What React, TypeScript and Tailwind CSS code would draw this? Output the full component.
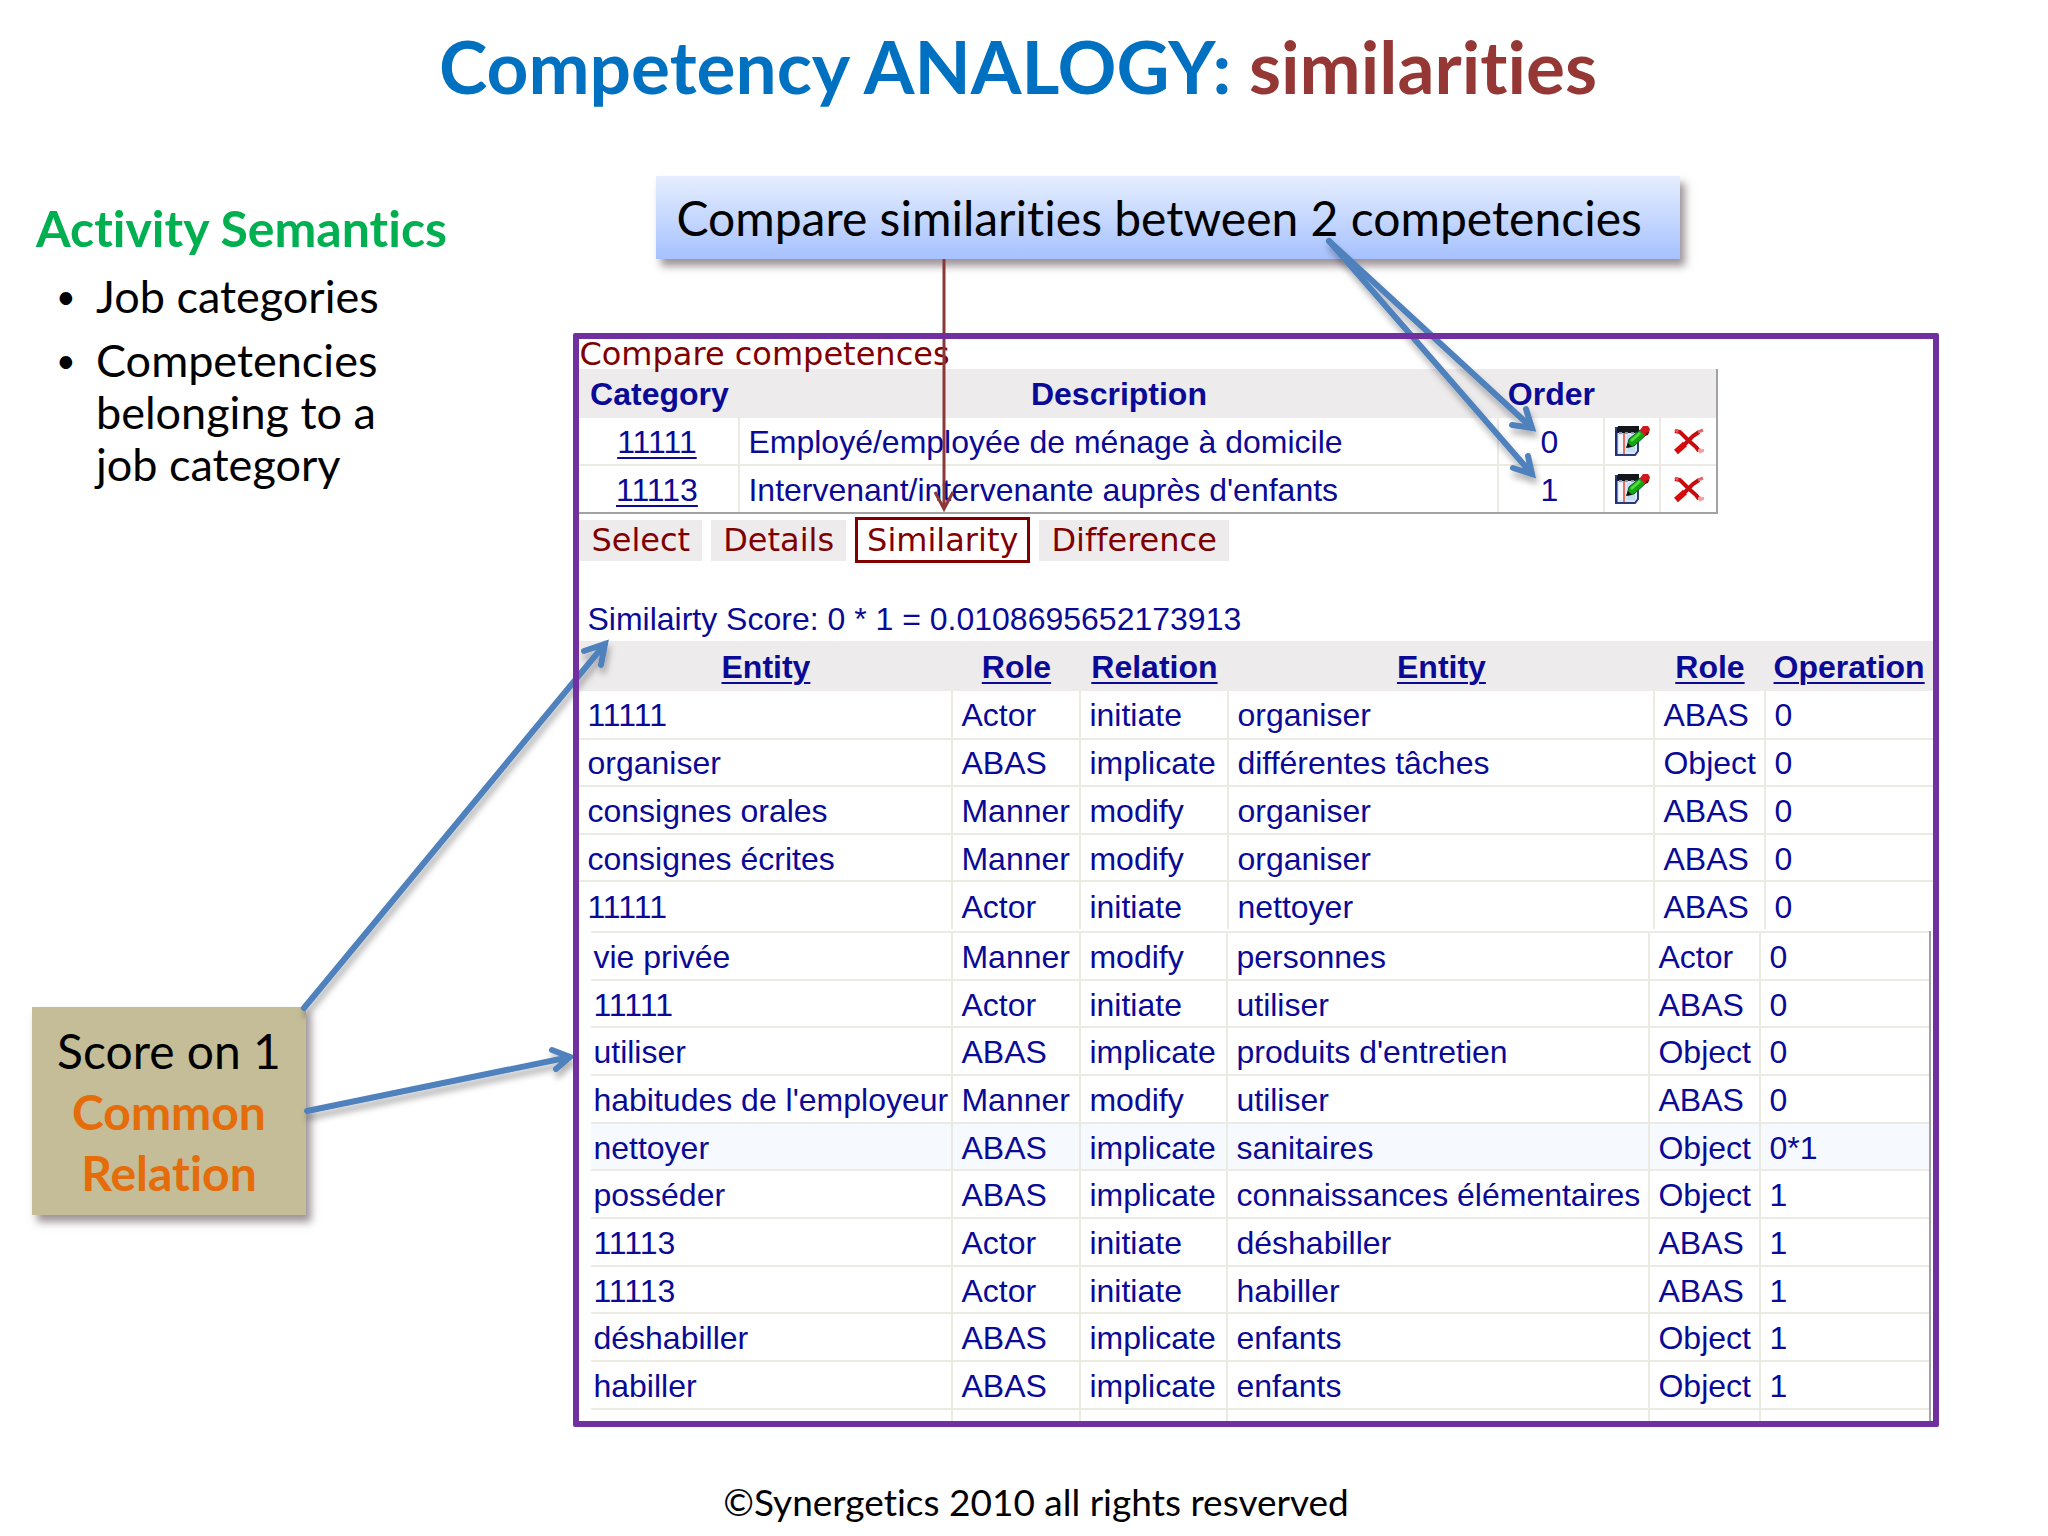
import React from "react";

type Relation = [string, string, string, string, string, string];

const competences = [
  { category: "11111", description: "Employé/employée de ménage à domicile", order: 0 },
  { category: "11113", description: "Intervenant/intervenante auprès d'enfants", order: 1 },
];

const firstRelations: Relation[] = [
  ["11111", "Actor", "initiate", "organiser", "ABAS", "0"],
  ["organiser", "ABAS", "implicate", "différentes tâches", "Object", "0"],
  ["consignes orales", "Manner", "modify", "organiser", "ABAS", "0"],
  ["consignes écrites", "Manner", "modify", "organiser", "ABAS", "0"],
  ["11111", "Actor", "initiate", "nettoyer", "ABAS", "0"],
];

const nextRelations: Relation[] = [
  ["vie privée", "Manner", "modify", "personnes", "Actor", "0"],
  ["11111", "Actor", "initiate", "utiliser", "ABAS", "0"],
  ["utiliser", "ABAS", "implicate", "produits d'entretien", "Object", "0"],
  ["habitudes de l'employeur", "Manner", "modify", "utiliser", "ABAS", "0"],
  ["nettoyer", "ABAS", "implicate", "sanitaires", "Object", "0*1"],
  ["posséder", "ABAS", "implicate", "connaissances élémentaires", "Object", "1"],
  ["11113", "Actor", "initiate", "déshabiller", "ABAS", "1"],
  ["11113", "Actor", "initiate", "habiller", "ABAS", "1"],
  ["déshabiller", "ABAS", "implicate", "enfants", "Object", "1"],
  ["habiller", "ABAS", "implicate", "enfants", "Object", "1"],
];

const headings = ["Entity", "Role", "Relation", "Entity", "Role", "Operation"];
const tabs = ["Select", "Details", "Similarity", "Difference"];

const EditIcon: React.FC = () => (
  <svg className="h-[30px] w-[35px]" viewBox="0 0 35 30" aria-hidden="true">
    <path d="M1 2h22v23l-3 4H1z" fill="#dbe8fb" stroke="#2b3a78" strokeWidth="2" />
    <path d="M4 9h4v17H4z" fill="#f4f8ff" />
    <path d="M12 9h8v17h-8z" fill="#c3dcf8" />
    <path d="M9 7v21" stroke="#e8705a" strokeWidth="2" />
    <path d="M3 0h21v6l-4 1H1z" fill="#15151c" />
    <path d="M4 7h3M10 7h3M16 7h3" stroke="#8d93a8" strokeWidth="2" />
    <path d="M1 5v24" stroke="#1f2c74" strokeWidth="3" />
    <path d="M12 21l2-8L25 4l6 5-12 11z" fill="#12a512" stroke="#0b5a10" strokeWidth="1" />
    <path d="M16 15l9-8" stroke="#4fdc3c" strokeWidth="3" />
    <path d="M11 22l2-5 4 4z" fill="#101010" />
    <path d="M25 4l3-4h5l2 3-1 4-4 3z" fill="#d3161b" />
    <path d="M31 7l3-1-1 3-3 1z" fill="#5b1010" />
  </svg>
);

const DeleteIcon: React.FC = () => (
  <svg className="h-[27px] w-[32px]" viewBox="0 0 32 27" fill="none" aria-hidden="true">
    <path d="M2 3l5 1 8 8 8 7 3 4" stroke="#c80d10" strokeWidth="4" />
    <path d="M26 21l2 4M28 22l3 1" stroke="#f0a0a0" strokeWidth="3" />
    <path d="M3 24l9-8" stroke="#d80a0a" strokeWidth="6" />
    <path d="M11 17l9-9 6-4" stroke="#c80d10" strokeWidth="4" />
    <path d="M25 4l5-2" stroke="#e06a6a" strokeWidth="3" />
    <path d="M1 2l3-1 2 3-2 1z" fill="#e05a5a" />
  </svg>
);

const Arrows: React.FC = () => (
  <svg
    className="pointer-events-none absolute inset-0 z-10 h-full w-full"
    viewBox="0 0 2048 1536"
    preserveAspectRatio="none"
    fill="none"
    aria-hidden="true"
  >
    <defs>
      <filter id="shade" x="-20%" y="-20%" width="140%" height="140%">
        <feDropShadow dx="2" dy="6" stdDeviation="3" floodColor="#000" floodOpacity="0.3" />
      </filter>
    </defs>
    <path d="M944 259V509M935 492l9 17 9-17" stroke="#8c3836" strokeWidth="3" />
    <g stroke="#4f81bd" strokeWidth="6" strokeLinecap="round" filter="url(#shade)">
      <path d="M1329 241L1532 428M1526 409l6 19-20-3" />
      <path d="M1329 241L1532 474M1528 456l4 18-19-6" />
      <path d="M304 1008L605 644M584 651l21-7-4 21" />
      <path d="M307 1111L570 1057M552 1050l18 7-14 12" />
    </g>
  </svg>
);

interface RelationRowProps {
  relation: Relation;
}

const RelationRow: React.FC<RelationRowProps> = ({ relation }) => (
  <tr
    className={
      relation[5] === "0*1"
        ? "h-[47px] border-b-2 border-[#ecebe3] bg-[#f6f9fe]"
        : "h-[47px] border-b-2 border-[#ecebe3]"
    }
  >
    {relation.map((cell, i) => (
      <td key={i} className="border-r-2 border-[#ecebe3] pl-2 pt-0.5 last:border-r-0">
        {cell}
      </td>
    ))}
  </tr>
);

const CompetenceTable: React.FC = () => (
  <div className="w-[1139px] border-b-2 border-r-2 border-[#a3a3a3]">
    <table className="h-[143px] w-full table-fixed leading-8">
      <colgroup>
        <col className="w-[160px]" />
        <col />
        <col className="w-[106px]" />
        <col className="w-[56px]" />
        <col className="w-[56px]" />
      </colgroup>
      <thead>
        <tr className="h-[49px] bg-[#edebec]">
          <th scope="col">Category</th>
          <th scope="col">Description</th>
          <th scope="col">Order</th>
          <td />
          <td />
        </tr>
      </thead>
      <tbody>
        {competences.map((item) => (
          <tr key={item.category} className="border-b-2 border-[#ecebe3] last:border-b-0">
            <td className="border-r-2 border-[#ecebe3] pr-1 pt-0.5 text-center">
              <a href="#" className="underline decoration-2 underline-offset-4">
                {item.category}
              </a>
            </td>
            <td className="whitespace-nowrap border-r-2 border-[#ecebe3] pl-2 pt-0.5">
              {item.description}
            </td>
            <td className="border-r-2 border-[#ecebe3] pr-1 pt-0.5 text-center">
              {item.order}
            </td>
            <td className="border-r-2 border-[#ecebe3]">
              <button className="mx-auto block" aria-label="Edit">
                <EditIcon />
              </button>
            </td>
            <td>
              <button className="mx-auto block" aria-label="Delete">
                <DeleteIcon />
              </button>
            </td>
          </tr>
        ))}
      </tbody>
    </table>
  </div>
);

const App: React.FC = () => {
  return (
    <div className="relative flex min-h-screen flex-col bg-white font-['Lato',sans-serif] text-black [font-variant-ligatures:none]">
      <h1 className="h-[176px] pr-3 pt-[22px] text-center text-[73px] font-bold leading-[88px] text-[#0070c0]">
        Competency ANALOGY: <span className="text-[#953735]">similarities</span>
      </h1>

      <main className="flex">
        <aside className="w-[28%] pl-8">
          <h2 className="mt-6 pl-1 text-[50px] font-bold leading-[56px] text-[#00b050]">
            Activity Semantics
          </h2>
          <ul className="mt-[14px] w-[370px] space-y-3 pl-6 text-[45px] leading-[52px]">
            <li className="flex before:w-10 before:shrink-0 before:text-[34px] before:content-['•']">
              Job categories
            </li>
            <li className="flex before:w-10 before:shrink-0 before:text-[34px] before:content-['•']">
              Competencies belonging to a job category
            </li>
          </ul>
          <div className="mt-[517px] flex h-[208px] w-[274px] flex-col items-center justify-center bg-[#c4bd97] text-[48px] leading-[61px] shadow-[5px_7px_8px_rgba(60,40,50,0.5)]">
            <p>Score on 1</p>
            <p className="font-bold text-[#e46c0a]">Common</p>
            <p className="font-bold text-[#e46c0a]">Relation</p>
          </div>
        </aside>

        <section className="w-2/3">
          <p className="ml-[83px] h-[83px] w-3/4 whitespace-nowrap bg-linear-to-b from-[#e6eefe] via-[#c6d8fe] to-[#a6c1fe] pl-5 text-[48px] leading-[83px] shadow-[5px_7px_8px_rgba(60,40,50,0.5)]">
            Compare similarities between 2 competencies
          </p>

          <div className="relative mt-[74px] p-[6px] font-['Liberation_Sans',sans-serif] text-[32px] text-[#0a0a96]">
            <div className="pointer-events-none absolute inset-0 z-20 rounded-xs border-6 border-[#7030a0]" />

            <h3 className="h-[30px] font-['DejaVu_Sans',sans-serif] text-[32px] leading-[30px] text-[#800000]">
              Compare competences
            </h3>
            <CompetenceTable />

            <nav className="mt-[3px] flex items-center gap-[9px] font-['DejaVu_Sans',sans-serif] text-[32px] leading-[40px] text-[#800000]">
              {tabs.map((tab) => (
                <button
                  key={tab}
                  className={
                    tab === "Similarity"
                      ? "h-[46px] border-3 border-[#800000] px-[9px]"
                      : "h-[41px] bg-[#edebec] px-3"
                  }
                >
                  {tab}
                </button>
              ))}
            </nav>

            <p className="mt-9 h-[42px] pl-2 leading-10">
              Similairty Score: 0 * 1 = 0.0108695652173913
            </p>

            <table className="h-[288px] w-full table-fixed whitespace-nowrap leading-8">
              <colgroup>
                <col className="w-[373px]" />
                <col className="w-[128px]" />
                <col className="w-[148px]" />
                <col className="w-[426px]" />
                <col className="w-[111px]" />
                <col />
              </colgroup>
              <thead>
                <tr className="h-[50px] bg-[#edebec]">
                  {headings.map((heading, i) => (
                    <th key={i} scope="col" className="pt-0.5">
                      <a href="#" className="underline decoration-2 underline-offset-4">
                        {heading}
                      </a>
                    </th>
                  ))}
                </tr>
              </thead>
              <tbody className="[&>tr:last-child]:border-b-0">
                {firstRelations.map((relation, i) => (
                  <RelationRow key={i} relation={relation} />
                ))}
              </tbody>
            </table>

            <div className="mt-[2px] pl-3 pr-[2px]">
              <div className="border-r-2 border-[#a3a3a3]">
                <table className="h-[490px] w-full table-fixed whitespace-nowrap border-t-2 border-[#ecebe3] leading-8 [&_td:first-child]:pl-0.5">
                  <colgroup>
                    <col className="w-[361px]" />
                    <col className="w-[128px]" />
                    <col className="w-[147px]" />
                    <col className="w-[422px]" />
                    <col className="w-[111px]" />
                    <col />
                  </colgroup>
                  <tbody>
                    {nextRelations.map((relation, i) => (
                      <RelationRow key={i} relation={relation} />
                    ))}
                    <tr className="h-3">
                      {headings.map((_, i) => (
                        <td key={i} className="border-r-2 border-[#ecebe3] last:border-r-0" />
                      ))}
                    </tr>
                  </tbody>
                </table>
              </div>
            </div>
          </div>
        </section>
      </main>

      <footer className="mt-auto pb-2 pl-6 text-center text-[37px] leading-[52px]">
        ©Synergetics 2010 all rights resverved
      </footer>

      <Arrows />
    </div>
  );
};

export default App;
